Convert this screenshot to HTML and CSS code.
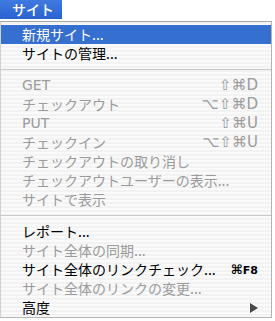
FILE: index.html
```html
<!DOCTYPE html>
<html lang="ja">
<head>
<meta charset="utf-8">
<link rel="stylesheet" href="styles.css">
</head>
<body>
<div class="menubar">
  <div class="title">サイト</div>
</div>
<div class="menu">
  <div class="item active"><span>新規サイト...</span></div>
  <div class="item"><span>サイトの管理...</span></div>
  <div class="sep"></div>
  <div class="item off"><span class="lat">GET</span><span class="key">⇧⌘D</span></div>
  <div class="item off"><span>チェックアウト</span><span class="key">⌥⇧⌘D</span></div>
  <div class="item off"><span class="lat">PUT</span><span class="key">⇧⌘U</span></div>
  <div class="item off"><span>チェックイン</span><span class="key">⌥⇧⌘U</span></div>
  <div class="item off"><span>チェックアウトの取り消し</span></div>
  <div class="item off"><span>チェックアウトユーザーの表示...</span></div>
  <div class="item off"><span>サイトで表示</span></div>
  <div class="sep"></div>
  <div class="item"><span>レポート...</span></div>
  <div class="item off"><span>サイト全体の同期...</span></div>
  <div class="item"><span>サイト全体のリンクチェック...</span><span class="key bold">⌘<small>F8</small></span></div>
  <div class="item off"><span>サイト全体のリンクの変更...</span></div>
  <div class="item"><span>高度</span><svg class="arrow" width="8" height="10" viewBox="0 0 8 10"><path d="M0 0 L8 5 L0 10 Z" fill="#4a4a4a"/></svg></div>
</div>
</body>
</html>
```
FILE: styles.css
```css
html, body {
  margin: 0;
  padding: 0;
  background: #ffffff;
}
body {
  width: 275px;
  height: 321px;
  overflow: hidden;
  font-family: "Noto Sans CJK JP", "DejaVu Sans", sans-serif;
  font-size: 14px;
}
.menubar {
  height: 21px;
  display: flex;
  background: #ffffff;
}
.title {
  width: 50px;
  height: 19px;
  padding-left: 12px;
  background: linear-gradient(#3f7ae0, #2a62d0);
  color: #ffffff;
  line-height: 19px;
  font-size: 14px;
  font-weight: 500;
}
.menu {
  width: 272px;
  height: 297px;
  box-sizing: border-box;
  border: 1px solid #b4b4b4;
  border-left-color: #d0d0d0;
  border-top-color: #a8a8a8;
  padding-top: 3px;
  background: repeating-linear-gradient(#f2f2f2 0 2px, #fafafa 2px 4px);
}
.item {
  height: 19px;
  display: flex;
  align-items: center;
  justify-content: space-between;
  padding: 0 13px 0 21px;
  color: #000000;
  line-height: 19px;
  white-space: nowrap;
}
.item.active {
  background: #356fcf;
  color: #ffffff;
}
.item.off {
  color: #9b9b9b;
}
.lat {
  font-family: "DejaVu Sans", sans-serif;
  font-size: 14px;
}
.key {
  font-family: "DejaVu Sans", sans-serif;
  font-size: 15px;
}
.key.bold {
  font-weight: bold;
  font-size: 13px;
}
.key small {
  font-size: 11px;
}
.sep {
  height: 13px;
  display: flex;
  align-items: center;
}
.sep::after {
  content: "";
  display: block;
  width: 100%;
  height: 1px;
  background: #c8c8c8;
}
.arrow {
  margin-right: 0;
}
```
